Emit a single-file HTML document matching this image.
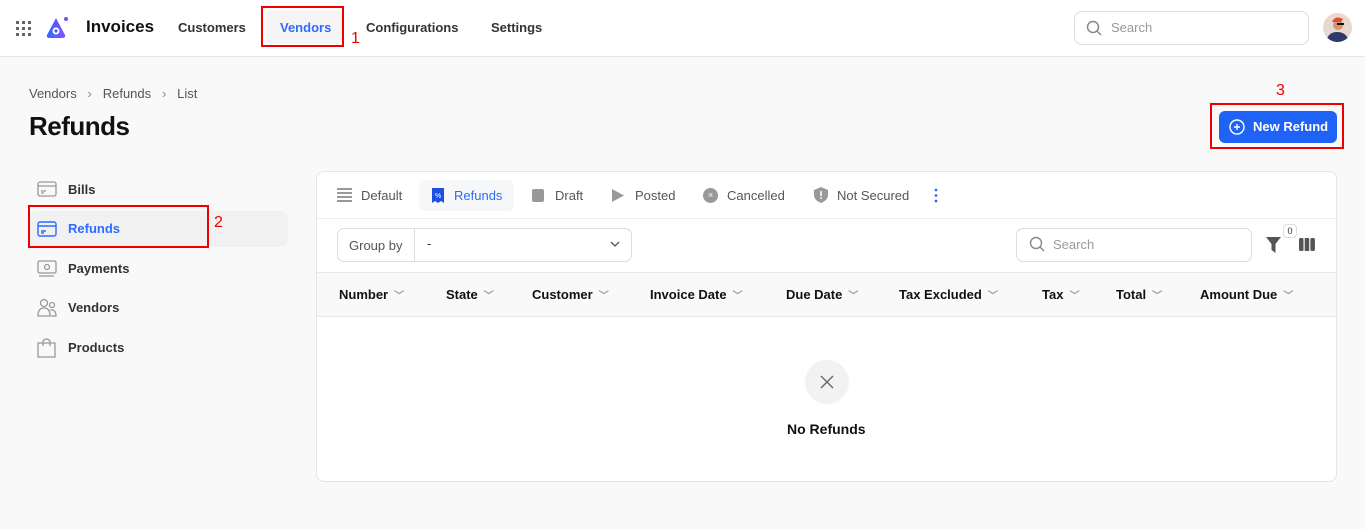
<!DOCTYPE html>
<html><head><meta charset="utf-8"><style>
*{box-sizing:border-box;margin:0;padding:0}
body{width:1365px;height:529px;background:#f9f9f9;font-family:"Liberation Sans",sans-serif;position:relative;overflow:hidden;color:#111}
.a{position:absolute;white-space:nowrap}
.hdr{position:absolute;left:0;top:0;width:1365px;height:57px;background:#fff;border-bottom:1px solid #e5e5e5}
.nav{font-size:13px;font-weight:bold;color:#333}
.red{border:2px solid #e00;position:absolute}
.rn{color:#e00;font-size:16px;position:absolute}
.side{font-size:13px;font-weight:bold;color:#333}
.card{position:absolute;left:316px;top:171px;width:1021px;height:311px;background:#fff;border:1px solid #e5e5e5;border-radius:8px;overflow:hidden}
.tab{font-size:13px;color:#555}
.th{font-size:13px;font-weight:bold;color:#111}
.ch{color:#999;font-size:10px;margin-left:6px}
</style></head><body>
<div class="hdr"></div>
<svg class="a" style="left:16px;top:21px" width="15" height="15"><g fill="#666"><rect x="0" y="0" width="3" height="3"/><rect x="6" y="0" width="3" height="3"/><rect x="12" y="0" width="3" height="3"/><rect x="0" y="6" width="3" height="3"/><rect x="6" y="6" width="3" height="3"/><rect x="12" y="6" width="3" height="3"/><rect x="0" y="12" width="3" height="3"/><rect x="6" y="12" width="3" height="3"/><rect x="12" y="12" width="3" height="3"/></g></svg>
<svg class="a" style="left:44px;top:15px" width="26" height="26" viewBox="0 0 26 26"><defs><linearGradient id="g" x1="0" x2="1"><stop offset="0" stop-color="#2f6bff"/><stop offset="1" stop-color="#8a4dff"/></linearGradient></defs><path d="M12 3 L3 20 Q2 23 6 23 L18 23 Q22 23 21 20 Z" fill="url(#g)"/><circle cx="12" cy="16" r="3.5" fill="#fff"/><circle cx="12" cy="16" r="1.6" fill="#4a5cff"/><circle cx="22" cy="4" r="2" fill="#7a4dff"/></svg>
<div class="a" style="left:86px;top:17px;font-size:17px;font-weight:bold">Invoices</div>
<div class="a nav" style="left:178px;top:20px">Customers</div>
<div class="a" style="left:266px;top:10px;width:76px;height:34px;background:#f5f5f5;border-radius:6px"></div>
<div class="a nav" style="left:280px;top:20px;color:#2f6bff">Vendors</div>
<div class="red" style="left:261px;top:6px;width:83px;height:41px"></div>
<div class="rn" style="left:351px;top:30px">1</div>
<div class="a nav" style="left:366px;top:20px">Configurations</div>
<div class="a nav" style="left:491px;top:20px">Settings</div>
<div class="a" style="left:1074px;top:11px;width:235px;height:34px;border:1px solid #ddd;border-radius:8px;background:#fff"></div>
<svg class="a" style="left:1086px;top:20px" width="16" height="16" fill="none" stroke="#888" stroke-width="1.5"><circle cx="7" cy="7" r="5.5"/><path d="M11 11l4 4"/></svg>
<div class="a" style="left:1111px;top:20px;font-size:13px;color:#999">Search</div>
<svg class="a" style="left:1323px;top:13px" width="29" height="29" viewBox="0 0 29 29"><clipPath id="c"><circle cx="14.5" cy="14.5" r="14.5"/></clipPath><g clip-path="url(#c)"><rect width="29" height="29" fill="#ead8d0"/><path d="M3 29 Q5 19 14 19 Q24 19 26 29Z" fill="#2d3a6a"/><circle cx="15" cy="12" r="5" fill="#d99570"/><path d="M9 9 Q12 2 20 6 L18 9 Z" fill="#e0502a"/><rect x="14" y="10" width="7" height="2" fill="#111"/></g></svg>
<div class="a" style="left:29px;top:86px;font-size:13px;color:#555">Vendors &nbsp;&nbsp;<span style="color:#888">›</span>&nbsp;&nbsp; Refunds &nbsp;&nbsp;<span style="color:#888">›</span>&nbsp;&nbsp; List</div>
<div class="a" style="left:29px;top:111px;font-size:26px;font-weight:bold;letter-spacing:-0.5px">Refunds</div>
<div class="rn" style="left:1276px;top:82px">3</div>
<div class="red" style="left:1210px;top:103px;width:134px;height:46px"></div>
<div class="a" style="left:1219px;top:111px;width:118px;height:32px;background:#1e63f6;border-radius:6px;color:#fff;font-size:13px;font-weight:bold;padding:8px 0 0 34px">New Refund</div>
<svg class="a" style="left:1229px;top:119px" width="16" height="16" fill="none" stroke="#fff" stroke-width="1.4"><circle cx="8" cy="8" r="7"/><path d="M8 5v6M5 8h6"/></svg>
<!-- sidebar -->
<div class="a" style="left:29px;top:211px;width:259px;height:36px;background:#f1f1f1;border-radius:8px"></div>
<svg class="a" style="left:37px;top:181px" width="20" height="16" fill="none" stroke="#999" stroke-width="1.3"><rect x="1" y="1" width="18" height="14" rx="2"/><path d="M1 5h18M4 10h5M4 12h3"/></svg>
<div class="a side" style="left:68px;top:182px">Bills</div>
<svg class="a" style="left:37px;top:221px" width="20" height="16" fill="none" stroke="#2f6bff" stroke-width="1.4"><rect x="1" y="1" width="18" height="14" rx="2"/><path d="M1 5h18M4 10h5M4 12h3"/></svg>
<div class="a side" style="left:68px;top:221px;color:#2f6bff">Refunds</div>
<div class="red" style="left:28px;top:205px;width:181px;height:43px"></div>
<div class="rn" style="left:214px;top:214px">2</div>
<svg class="a" style="left:37px;top:260px" width="20" height="17" fill="none" stroke="#999" stroke-width="1.3"><rect x="1" y="1" width="18" height="12" rx="1.5"/><circle cx="10" cy="7" r="2.5"/><path d="M2 16h15"/></svg>
<div class="a side" style="left:68px;top:261px">Payments</div>
<svg class="a" style="left:37px;top:298px" width="20" height="20" fill="none" stroke="#999" stroke-width="1.3"><circle cx="7" cy="5" r="3.5"/><circle cx="15" cy="7" r="2.5"/><path d="M1 18 Q1 10 7 10 Q13 10 13 18Z M13 12 Q19 11 19 18 L14 18"/></svg>
<div class="a side" style="left:68px;top:300px">Vendors</div>
<svg class="a" style="left:37px;top:337px" width="19" height="21" fill="none" stroke="#999" stroke-width="1.3"><path d="M1 6h17v14H1z M6 9V4 Q9.5 0 13 4v5"/></svg>
<div class="a side" style="left:68px;top:340px">Products</div>
<!-- card -->
<div class="card">
 <div class="a" style="left:0;top:46px;width:1021px;border-top:1px solid #eee"></div>
 <svg class="a" style="left:20px;top:16px" width="15" height="14" fill="#999"><rect y="0" width="15" height="2"/><rect y="4" width="15" height="2"/><rect y="8" width="15" height="2"/><rect y="12" width="15" height="2"/></svg>
 <div class="a tab" style="left:44px;top:16px">Default</div>
 <div class="a" style="left:102px;top:8px;width:95px;height:31px;background:#f6f7f9;border-radius:6px"></div>
 <svg class="a" style="left:115px;top:16px" width="12" height="15"><path d="M0 0h12v15l-3-2-3 2-3-2-3 2z" fill="#1e4fe0"/><text x="3" y="10" font-size="7" fill="#fff" font-family="Liberation Sans">%</text></svg>
 <div class="a tab" style="left:137px;top:16px;color:#2f6bff">Refunds</div>
 <div class="a" style="left:215px;top:17px;width:12px;height:13px;background:#999;border-radius:2px"></div>
 <div class="a tab" style="left:238px;top:16px">Draft</div>
 <svg class="a" style="left:295px;top:17px" width="12" height="13"><path d="M0 0l12 6.5L0 13z" fill="#999"/></svg>
 <div class="a tab" style="left:318px;top:16px">Posted</div>
 <div class="a" style="left:386px;top:16px;width:15px;height:15px;background:#999;border-radius:50%;color:#fff;font-size:9px;text-align:center;line-height:15px">×</div>
 <div class="a tab" style="left:410px;top:16px">Cancelled</div>
 <svg class="a" style="left:497px;top:15px" width="14" height="16"><path d="M7 0L14 3v5q0 5-7 8q-7-3-7-8V3z" fill="#999"/><rect x="6.2" y="4" width="1.6" height="5" fill="#fff"/><rect x="6.2" y="10" width="1.6" height="1.6" fill="#fff"/></svg>
 <div class="a tab" style="left:520px;top:16px">Not Secured</div>
 <svg class="a" style="left:617px;top:16px" width="4" height="15" fill="#2f6bff"><circle cx="2" cy="2" r="1.4"/><circle cx="2" cy="7.5" r="1.4"/><circle cx="2" cy="13" r="1.4"/></svg>
 <div class="a" style="left:20px;top:56px;width:295px;height:34px;border:1px solid #ddd;border-radius:7px"></div>
 <div class="a" style="left:97px;top:57px;height:32px;border-left:1px solid #ddd"></div>
 <div class="a" style="left:32px;top:66px;font-size:13px;color:#555">Group by</div>
 <div class="a" style="left:110px;top:64px;font-size:13px;color:#333">-</div>
 <svg class="a" style="left:293px;top:68px" width="10" height="8" fill="none" stroke="#555" stroke-width="1.3"><path d="M1 2l4 4 4-4"/></svg>
 <div class="a" style="left:699px;top:56px;width:236px;height:34px;border:1px solid #ddd;border-radius:7px"></div>
 <svg class="a" style="left:712px;top:64px" width="16" height="16" fill="none" stroke="#888" stroke-width="1.4"><circle cx="7" cy="7" r="5.5"/><path d="M11 11l4 4"/></svg>
 <div class="a" style="left:736px;top:65px;font-size:13px;color:#999">Search</div>
 <svg class="a" style="left:949px;top:65px" width="15" height="16"><path d="M0 0h15l-5.5 7v9l-4-3V7z" fill="#555"/></svg>
 <div class="a" style="left:966px;top:52px;width:14px;height:14px;border:1px solid #ddd;border-radius:4px;background:#fff;font-size:9px;text-align:center;line-height:12px;color:#333">0</div>
 <svg class="a" style="left:982px;top:66px" width="16" height="13" fill="#555"><rect x="0" y="0" width="4.5" height="13" rx="1.5"/><rect x="5.7" y="0" width="4.5" height="13" rx="0.5"/><rect x="11.4" y="0" width="4.5" height="13" rx="1.5"/></svg>
 <div class="a" style="left:0;top:100px;width:1021px;height:45px;background:#f9f9f9;border-top:1px solid #e8e8e8;border-bottom:1px solid #e8e8e8"></div>
 <div class="a th" style="left:22px;top:115px">Number<span class="ch">﹀</span></div>
 <div class="a th" style="left:129px;top:115px">State<span class="ch">﹀</span></div>
 <div class="a th" style="left:215px;top:115px">Customer<span class="ch">﹀</span></div>
 <div class="a th" style="left:333px;top:115px">Invoice Date<span class="ch">﹀</span></div>
 <div class="a th" style="left:469px;top:115px">Due Date<span class="ch">﹀</span></div>
 <div class="a th" style="left:582px;top:115px">Tax Excluded<span class="ch">﹀</span></div>
 <div class="a th" style="left:725px;top:115px">Tax<span class="ch">﹀</span></div>
 <div class="a th" style="left:799px;top:115px">Total<span class="ch">﹀</span></div>
 <div class="a th" style="left:883px;top:115px">Amount Due<span class="ch">﹀</span></div>
 <div class="a" style="left:488px;top:188px;width:44px;height:44px;border-radius:50%;background:#f2f2f2"></div>
 <svg class="a" style="left:503px;top:203px" width="14" height="14" stroke="#666" stroke-width="1.4"><path d="M1 1l12 12M13 1L1 13"/></svg>
 <div class="a" style="left:470px;top:249px;font-size:14px;font-weight:bold">No Refunds</div>
</div>
</body></html>
